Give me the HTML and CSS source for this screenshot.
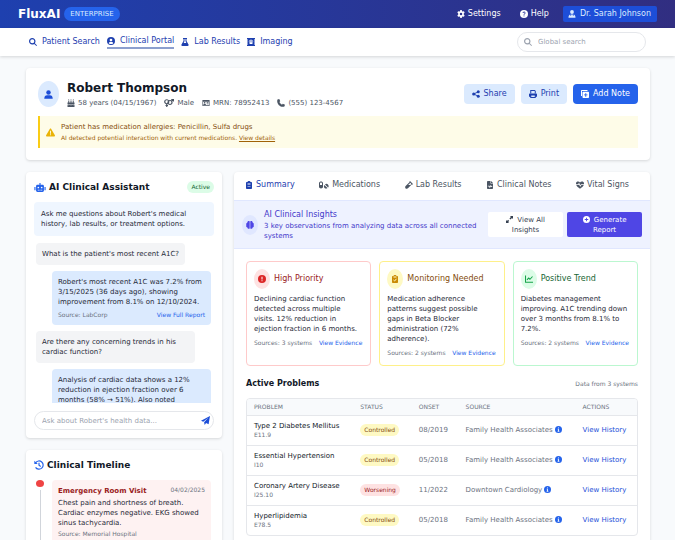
FILE: index.html
```html
<!DOCTYPE html>
<html lang="en">
<head>
<meta charset="utf-8">
<meta name="viewport" content="width=device-width, initial-scale=1">
<title>FluxAI Clinical Portal</title>
<link rel="stylesheet" href="styles.css">
</head>
<body>
<svg class="sprite" aria-hidden="true">
  <symbol id="search" viewBox="0 0 512 512"><path d="M416 208c0 45.900-14.900 88.300-40 122.700L502.600 457.400c12.500 12.500 12.500 32.800 0 45.300s-32.800 12.500-45.300 0L330.700 376c-34.400 25.200-76.800 40-122.700 40C93.100 416 0 322.900 0 208S93.100 0 208 0S416 93.100 416 208zM208 340a132 132 0 1 0 0-264 132 132 0 1 0 0 264z"/></symbol>
  <symbol id="user" viewBox="0 0 16 16"><circle cx="8" cy="4.500" r="4"/><path d="M.5 15.500c0-4 2-6 5-6h5c3 0 5 2 5 6z"/></symbol>
  <symbol id="doctor" viewBox="0 0 16 16"><circle cx="8" cy="4" r="3.800"/><path d="M1 15.500c0-4 1.500-6 4-6.300V12h1.200V9.200h3.600V12H11V9.200c2.500.3 4 2.300 4 6.300z"/></symbol>
  <symbol id="circle-user" viewBox="0 0 16 16"><path fill-rule="evenodd" d="M8 0a8 8 0 1 1 0 16A8 8 0 0 1 8 0zm0 3.500a2.700 2.700 0 1 0 0 5.400 2.700 2.700 0 0 0 0-5.400zM3.300 12.500c2.500 2.300 6.900 2.300 9.400 0-.7-1.700-2-2.500-3.400-2.500H6.700c-1.400 0-2.700.8-3.400 2.500z"/></symbol>
  <symbol id="flask" viewBox="0 0 16 16"><path fill-rule="evenodd" d="M4 0h8v2h-1v4l4 7c.8 1.500 0 3-1.600 3H2.600C1 16 .2 14.500 1 13l4-7V2H4zm3 2v4.500L5.300 10h5.400L9 6.500V2z"/></symbol>
  <symbol id="xray" viewBox="0 0 16 16"><path fill-rule="evenodd" d="M0 0h16v2h-1v12h1v2H0v-2h1V2H0zm7.400 2.500V4H4v1h3.400v1.300H3.500v1h3.900v1.300H4v1h2L4.500 12h7L10 9.600h2v-1H8.600V7.300h3.900v-1H8.600V5H12V4H8.600V2.500z"/></symbol>
  <symbol id="gear" viewBox="0 0 16 16"><path fill-rule="evenodd" d="M6.500 0h3l.5 2.300 1.400.8L13.700 2.400l1.600 2.700L13.500 6.800v2.400l1.800 1.700-1.600 2.700-2.300-.7-1.400.8-.5 2.300h-3L6 13.700l-1.400-.8-2.300.7L.7 10.900l1.800-1.700V6.800L.7 5.100l1.600-2.700 2.300.7L6 2.300zM8 5.500a2.500 2.500 0 1 0 0 5 2.500 2.500 0 0 0 0-5z"/></symbol>
  <symbol id="question" viewBox="0 0 16 16"><circle cx="8" cy="8" r="8"/><path class="cut-line" d="M5.800 6c.2-2.800 4.800-2.500 4.500.2C10.200 7.600 8 7.700 8 9.500M8 11v1.700"/></symbol>
  <symbol id="cake" viewBox="0 0 16 16"><path d="M2.500 3h2v4h-2zm4.500 0h2v4H7zm4.500 0h2v4h-2zM3.500 0l1 2h-2zM8 0l1 2H7zm4.500 0l1 2h-2zM1 7h14v3.500l-1.500.8-2-1-2 1-1.500-.8-1.500.8-2-1-2 1L1 10.500zM1 12l1.500.6 2-.9 2 1 1.500-.8 1.500.8 2-1 2 .9L15 12v4H1z"/></symbol>
  <symbol id="gender" viewBox="0 0 20 16"><g fill="none" stroke="currentColor" stroke-width="2.400"><circle cx="5.500" cy="5.500" r="4"/><circle cx="12" cy="7" r="4"/><path d="M5.500 10v6M3 13h5M15 4l4-3M14.500 1H19v4"/></g></symbol>
  <symbol id="idcard" viewBox="0 0 18 16"><path fill-rule="evenodd" d="M1 1h16v14H1zm1.500 4v8h13V5z"/><circle cx="6" cy="7.300" r="1.800"/><path d="M3 12.500c0-3.800 6-3.800 6 0zM10.500 6h4v1.700h-4zm0 3h4v1.700h-4z"/></symbol>
  <symbol id="phone" viewBox="0 0 16 16"><path d="M1 1.200 4.500 0l2 4.500L4.700 6c1.100 2.400 2.900 4.200 5.300 5.300l1.500-1.800 4.500 2L14.800 15C7 18-2 9 1 1.200z"/></symbol>
  <symbol id="share" viewBox="0 0 16 16"><circle cx="3.500" cy="8" r="3.200"/><circle cx="12.500" cy="3.500" r="3"/><circle cx="12.500" cy="12.500" r="3"/><path fill="none" stroke="currentColor" stroke-width="1.800" d="m12.500 3.500-9 4.500 9 4.500"/></symbol>
  <symbol id="print" viewBox="0 0 16 16"><path fill-rule="evenodd" d="M2.500 0h9L13.500 2v4.500h-2V2h-7v4.500h-2zM2 7h12c1.200 0 2 .8 2 2v4.500h-2.500V16h-11v-2.500H0V9c0-1.200.8-2 2-2zm2.500 4v3h7v-3z"/></symbol>
  <symbol id="copyplus" viewBox="0 0 16 16"><path fill-rule="evenodd" d="M0 1.500C0 .7.700 0 1.500 0H13v2H2v10H0zM4.500 3.500h10c.8 0 1.500.7 1.500 1.500v9.500c0 .8-.7 1.500-1.500 1.500h-10c-.8 0-1.500-.7-1.500-1.500V5c0-.8.700-1.500 1.500-1.500zm4 2.800V9H6v1.700h2.500v2.600h2v-2.600H13V9h-2.500V6.300z"/></symbol>
  <symbol id="warning" viewBox="0 0 16 16"><path fill-rule="evenodd" d="M8 1c.6 0 1 .3 1.300.8l6.500 11.200c.5 1 0 2-1.200 2H1.400C.2 15-.3 14 .2 13L6.700 1.800C7 1.300 7.400 1 8 1zM7.200 5v5h1.600V5zm0 6.200v1.600h1.600v-1.600z"/></symbol>
  <symbol id="robot" viewBox="0 0 20 16"><path fill-rule="evenodd" d="M9 0h2v3h3.500C16 3 17 4 17 5.500v8c0 1.500-1 2.500-2.500 2.500h-9C4 16 3 15 3 13.500v-8C3 4 4 3 5.500 3H9zM7 6.500a1.500 1.500 0 1 0 0 3 1.500 1.500 0 0 0 0-3zm6 0a1.500 1.500 0 1 0 0 3 1.500 1.500 0 0 0 0-3zM6 12v1.500h2V12zm3 0v1.500h2V12zm3 0v1.500h2V12zM0 7h2v6H0zm18 0h2v6h-2z"/></symbol>
  <symbol id="send" viewBox="0 0 16 16"><path d="M16 0 13.500 14.500 9 12.500 6.500 16 5.500 11 13 3 4 10 0 8.500z"/></symbol>
  <symbol id="history" viewBox="0 0 16 16"><path fill="none" stroke="currentColor" stroke-width="1.900" d="M2.500 4.500a6.600 6.600 0 1 1 0 7.200M8 4.500V8.300l2.800 2"/><path d="M.5 1v5.500H6z"/></symbol>
  <symbol id="clipboard" viewBox="0 0 14 16"><path fill-rule="evenodd" d="M2.500 2H4c.5-2.500 5.500-2.500 6 0h1.500C12.300 2 13 2.700 13 3.500v11c0 .8-.7 1.500-1.500 1.500h-9C1.700 16 1 15.300 1 14.500v-11C1 2.700 1.700 2 2.500 2zM4 4v1h6V4zm0 3v1h6V7zm0 3v1h6v-1z"/></symbol>
  <symbol id="clipcheck" viewBox="0 0 14 16"><path d="M2.500 2H4c.5-2.500 5.500-2.500 6 0h1.500C12.300 2 13 2.700 13 3.500v11c0 .8-.7 1.500-1.500 1.500h-9C1.700 16 1 15.300 1 14.500v-11C1 2.700 1.700 2 2.500 2z"/><path class="cut-check" d="M4 4h6M4 10l2.200 2L10 7.500"/></symbol>
  <symbol id="pills" viewBox="0 0 20 16"><path fill-rule="evenodd" d="M0 4.500C0 0 8 0 8 4.500v7C8 16 0 16 0 11.500zm2 0V8h4V4.500c0-2-4-2-4 0z"/><path d="M10.500 8 17 14.200c-4.500 3.300-9-2-6.500-6.200zM12 6.800c4-3.500 9.500 2 6.300 6.200z"/></symbol>
  <symbol id="vial" viewBox="0 0 16 16"><path fill-rule="evenodd" d="m10 0 6 6-1.300 1.300-.8-.6-8 8c-3 3-7.600-1.600-4.600-4.600l8-8-.6-.8zm.8 3.500L6.300 8h4.500l1.800-2z"/></symbol>
  <symbol id="filewave" viewBox="0 0 12 16"><path fill-rule="evenodd" d="M1.500 0H7v5h5v9.500c0 .8-.7 1.500-1.500 1.500h-9C.7 16 0 15.300 0 14.500v-13C0 .7.700 0 1.500 0zM8 0l4 4H8zM1.500 9.500V11H4l1 2.500h1L7.500 11l.7 1h2.300v-1.500H9L8 8.500H7L5.500 11 5 9.500z"/></symbol>
  <symbol id="heart" viewBox="0 0 16 16"><path d="M8 3C6 0 0 .5 0 5v1.500h4.200L6 3.500l2.700 5 1.200-2H16V5c0-4.500-6-5-8-2zM.5 8c1 3 4 5 7.500 7.500C11.500 13 14.500 11 15.500 8h-4.700L8.500 11.500 6 6.800 5 8z"/></symbol>
  <symbol id="brain" viewBox="0 0 16 16"><path d="M7.400 1v14C5 16.500 3 15 2.800 13 .5 12.500-.3 10 .8 8-.3 6 .5 4 2.500 3.500 2.500.8 5.500-.8 7.400 1zM8.600 1v14c2.400 1.500 4.400 0 4.600-2 2.300-.5 3.100-3 2-5 1.100-2 .3-4-1.700-4.500 0-2.700-3-4.300-4.900-2.500z"/></symbol>
  <symbol id="expand" viewBox="0 0 16 16"><path d="M9 0h7v7l-2.300-2.300-3.500 3.500-2.400-2.400 3.500-3.500zM7 16H0V9l2.300 2.300 2.500-2.500 2.400 2.400-2.500 2.500z"/></symbol>
  <symbol id="plus-circle" viewBox="0 0 16 16"><path fill-rule="evenodd" d="M8 0a8 8 0 1 1 0 16A8 8 0 0 1 8 0zM7 4v3H4v2h3v3h2V9h3V7H9V4z"/></symbol>
  <symbol id="alert" viewBox="0 0 16 16"><circle cx="8" cy="8" r="8"/><path class="cut-light" d="M8 3.500v5.500M8 10.500v2"/></symbol>
  <symbol id="chart" viewBox="0 0 16 16"><path fill="none" stroke="currentColor" stroke-width="2.200" stroke-linejoin="round" d="M1 1v13.500h15M4 10l3-4 3 2.500L15 3"/></symbol>
  <symbol id="info" viewBox="0 0 16 16"><circle cx="8" cy="8" r="8"/><path class="cut-light" d="M8 3.300v2M6.300 7.200H8V12M6 12h4"/></symbol>
</svg>

<div class="page">
<header class="topbar">
  <div class="brand"><span class="logo">FluxAI</span><span class="edition">ENTERPRISE</span></div>
  <div class="account">
    <button class="plain"><svg class="icon"><use href="#gear"/></svg>Settings</button>
    <button class="plain help"><svg class="icon"><use href="#question"/></svg>Help</button>
    <button class="profile"><svg class="icon"><use href="#doctor"/></svg>Dr. Sarah Johnson</button>
  </div>
</header>

<div class="navbar">
  <nav class="links">
    <a href="#"><svg class="icon"><use href="#search"/></svg>Patient Search</a>
    <a href="#" class="current"><svg class="icon"><use href="#circle-user"/></svg>Clinical Portal</a>
    <a href="#"><svg class="icon"><use href="#flask"/></svg>Lab Results</a>
    <a href="#"><svg class="icon"><use href="#xray"/></svg>Imaging</a>
  </nav>
  <label class="search"><svg class="icon"><use href="#search"/></svg><input type="search" placeholder="Global search" aria-label="Global search"></label>
</div>

<main>
  <section class="card patient">
    <div class="patient-row">
      <div class="avatar"><svg class="icon"><use href="#user"/></svg></div>
      <div class="identity">
        <h1>Robert Thompson</h1>
        <ul class="facts">
          <li><svg class="icon"><use href="#cake"/></svg>58 years (04/15/1967)</li>
          <li><svg class="icon wide"><use href="#gender"/></svg>Male</li>
          <li><svg class="icon"><use href="#idcard"/></svg>MRN: 78952413</li>
          <li><svg class="icon"><use href="#phone"/></svg>(555) 123-4567</li>
        </ul>
      </div>
      <div class="actions">
        <button><svg class="icon"><use href="#share"/></svg>Share</button>
        <button><svg class="icon"><use href="#print"/></svg>Print</button>
        <button class="primary"><svg class="icon"><use href="#copyplus"/></svg>Add Note</button>
      </div>
    </div>
    <div class="allergy">
      <svg class="icon"><use href="#warning"/></svg>
      <div>
        <p class="allergy-title">Patient has medication allergies: Penicillin, Sulfa drugs</p>
        <p class="allergy-note">AI detected potential interaction with current medications. <a href="#">View details</a></p>
      </div>
    </div>
  </section>

  <div class="columns">
    <aside>
      <section class="card side">
        <div class="side-head"><h2><svg class="icon big"><use href="#robot"/></svg>AI Clinical Assistant</h2><span class="pill green">Active</span></div>
        <p class="intro">Ask me questions about Robert's medical history, lab results, or treatment options.</p>
        <div class="chat">
          <p class="bubble">What is the patient's most recent A1C?</p>
          <div class="bubble reply">
            <p>Robert's most recent A1C was 7.2% from 3/15/2025 (36 days ago), showing improvement from 8.1% on 12/10/2024.</p>
            <div class="meta"><span>Source: LabCorp</span><a href="#">View Full Report</a></div>
          </div>
          <p class="bubble">Are there any concerning trends in his cardiac function?</p>
          <div class="bubble reply">
            <p>Analysis of cardiac data shows a 12% reduction in ejection fraction over 6 months (58% → 51%). Also noted</p>
          </div>
        </div>
        <div class="ask"><input type="text" placeholder="Ask about Robert's health data..." aria-label="Ask about Robert's health data"><button aria-label="Send"><svg class="icon"><use href="#send"/></svg></button></div>
      </section>

      <section class="card side">
        <h2><svg class="icon history"><use href="#history"/></svg>Clinical Timeline</h2>
        <div class="timeline">
          <div class="rail"><span class="dot"></span><span class="line"></span></div>
          <article class="event">
            <div class="event-head"><h3>Emergency Room Visit</h3><time>04/02/2025</time></div>
            <p>Chest pain and shortness of breath. Cardiac enzymes negative. EKG showed sinus tachycardia.</p>
            <small>Source: Memorial Hospital</small>
          </article>
        </div>
      </section>
    </aside>

    <section class="card record">
      <nav class="tabs">
        <a href="#" class="current"><svg class="icon"><use href="#clipboard"/></svg>Summary</a>
        <a href="#"><svg class="icon wide"><use href="#pills"/></svg>Medications</a>
        <a href="#"><svg class="icon"><use href="#vial"/></svg>Lab Results</a>
        <a href="#"><svg class="icon"><use href="#filewave"/></svg>Clinical Notes</a>
        <a href="#"><svg class="icon"><use href="#heart"/></svg>Vital Signs</a>
      </nav>
      <div class="insights">
        <div class="orb indigo"><svg class="icon"><use href="#brain"/></svg></div>
        <div class="insights-text"><h3>AI Clinical Insights</h3><p>3 key observations from analyzing data across all connected systems</p></div>
        <button><svg class="icon"><use href="#expand"/></svg> View All Insights</button>
        <button class="solid"><svg class="icon"><use href="#plus-circle"/></svg> Generate Report</button>
      </div>
      <div class="body">
        <div class="findings">
          <article class="finding red">
            <div class="finding-head"><div class="orb"><svg class="icon"><use href="#alert"/></svg></div><h3>High Priority</h3></div>
            <p>Declining cardiac function detected across multiple visits. 12% reduction in ejection fraction in 6 months.</p>
            <div class="meta"><span>Sources: 3 systems</span><a href="#">View Evidence</a></div>
          </article>
          <article class="finding yellow">
            <div class="finding-head"><div class="orb"><svg class="icon"><use href="#clipcheck"/></svg></div><h3>Monitoring Needed</h3></div>
            <p>Medication adherence patterns suggest possible gaps in Beta Blocker administration (72% adherence).</p>
            <div class="meta"><span>Sources: 2 systems</span><a href="#">View Evidence</a></div>
          </article>
          <article class="finding teal">
            <div class="finding-head"><div class="orb"><svg class="icon"><use href="#chart"/></svg></div><h3>Positive Trend</h3></div>
            <p>Diabetes management improving. A1C trending down over 3 months from 8.1% to 7.2%.</p>
            <div class="meta"><span>Sources: 2 systems</span><a href="#">View Evidence</a></div>
          </article>
        </div>
        <div class="table-head"><h3>Active Problems</h3><span>Data from 3 systems</span></div>
        <div class="table-box">
        <table>
          <thead><tr><th class="c-problem">PROBLEM</th><th class="c-status">STATUS</th><th class="c-onset">ONSET</th><th class="c-source">SOURCE</th><th>ACTIONS</th></tr></thead>
          <tbody>
            <tr><td><b>Type 2 Diabetes Mellitus</b><small>E11.9</small></td><td><span class="pill amber">Controlled</span></td><td>08/2019</td><td>Family Health Associates <svg class="icon info"><use href="#info"/></svg></td><td><a href="#">View History</a></td></tr>
            <tr><td><b>Essential Hypertension</b><small>I10</small></td><td><span class="pill amber">Controlled</span></td><td>05/2018</td><td>Family Health Associates <svg class="icon info"><use href="#info"/></svg></td><td><a href="#">View History</a></td></tr>
            <tr><td><b>Coronary Artery Disease</b><small>I25.10</small></td><td><span class="pill rose">Worsening</span></td><td>11/2022</td><td>Downtown Cardiology <svg class="icon info"><use href="#info"/></svg></td><td><a href="#">View History</a></td></tr>
            <tr><td><b>Hyperlipidemia</b><small>E78.5</small></td><td><span class="pill amber">Controlled</span></td><td>05/2018</td><td>Family Health Associates <svg class="icon info"><use href="#info"/></svg></td><td><a href="#">View History</a></td></tr>
          </tbody>
        </table>
        </div>
      </div>
    </section>
  </div>
</main>
</div>
</body>
</html>
```
FILE: styles.css
```css
* { box-sizing: border-box; margin: 0; padding: 0; }
body {
  font-family: "DejaVu Sans", sans-serif;
  font-size: 7px;
  line-height: 10px;
  color: #1f2937;
  background: #f8fafc;
}
button, input { font: inherit; color: inherit; border: 0; background: none; }
a { color: inherit; text-decoration: none; }
ul { list-style: none; }
small { display: block; font-size: 6px; line-height: 8px; color: #6b7280; }
.sprite { display: none; }
.icon { width: 8px; height: 8px; flex: none; fill: currentColor; }
.icon.wide { width: 10px; }
.cut-line { fill: none; stroke: #2a339a; stroke-width: 2; }
.cut-light { fill: none; stroke: #fff; stroke-width: 2; }
.cut-check { fill: none; stroke: #fef9c3; stroke-width: 2; }
.page { height: 100vh; overflow: hidden; }

.topbar {
  display: flex; align-items: center; justify-content: space-between;
  height: 28px; padding: 0 18px;
  color: #fff; background: linear-gradient(90deg, #1e40af, #312e81);
}
.brand { display: flex; align-items: center; gap: 4px; }
.logo { font-size: 12px; line-height: 16px; font-weight: 700; }
.edition { padding: 2px 6px; border-radius: 8px; background: #2563eb; color: #dbeafe; }
.account { display: flex; align-items: center; font-size: 8px; }
.account button { display: flex; align-items: center; gap: 3px; }
.account .help { margin-left: 19px; }
.account .profile { margin-left: 14px; padding: 3px 6px 3px 5px; gap: 4px; border-radius: 2px; background: #1d4ed8; color: #dbeafe; }

.navbar {
  display: flex; align-items: center; justify-content: space-between;
  height: 28px; padding: 0 29px; background: #fff;
  box-shadow: 0 1px 3px rgba(0, 0, 0, .15);
}
.links { display: flex; align-items: center; gap: 7px; font-size: 8px; color: #1e40af; }
.links a { display: flex; align-items: center; gap: 5px; height: 14px; }
.links .current { border-bottom: 2px solid #8c9fce; }
.search { display: flex; align-items: center; gap: 6px; width: 129px; height: 20px; padding: 0 6px; border: 1px solid #e5e7eb; border-radius: 10px; color: #9ca3af; }
.search input { flex: 1; min-width: 0; outline: 0; }
input::placeholder { color: #9ca3af; opacity: 1; }

main { padding: 12px 25px 12px 26px; }
.card { background: #fff; border-radius: 4px; box-shadow: 0 1px 3px rgba(0, 0, 0, .14); }
.patient { padding: 12px; }
.patient-row { display: flex; align-items: center; }
.avatar { display: flex; align-items: center; justify-content: center; width: 21px; height: 26px; border-radius: 50%; background: #dbeafe; color: #1d4ed8; }
.avatar .icon { width: 9px; height: 9px; }
.identity { margin-left: 8px; }
h1 { font-size: 12px; line-height: 16px; color: #111827; }
.facts { display: flex; gap: 8px; margin-top: 2px; color: #4b5563; }
.facts li { display: flex; align-items: center; gap: 3px; }
.actions { display: flex; gap: 6px; margin-left: auto; font-size: 8px; color: #1e40af; }
.actions button { display: flex; align-items: center; gap: 4px; height: 20px; padding: 0 8px; border-radius: 4px; background: #dbeafe; }
.actions .primary { background: #2563eb; color: #fff; }
.allergy { display: flex; align-items: center; gap: 6px; height: 32px; margin-top: 8px; padding: 0 6px; border-left: 2px solid #facc15; background: #fefce8; color: #eab308; }
.allergy .icon { width: 9px; height: 9px; }
.allergy-title { color: #854d0e; }
.allergy-note { margin-top: 1px; font-size: 6px; color: #a16207; }
.allergy-note a { text-decoration: underline; }

.columns { display: grid; grid-template-columns: 196px 1fr; gap: 12px; margin-top: 12px; align-items: start; }
aside { display: grid; gap: 12px; }
.side { padding: 8px; }
.side-head { display: flex; align-items: center; justify-content: space-between; }
h2 { display: flex; align-items: center; gap: 3px; font-size: 9px; line-height: 14px; color: #111827; }
h2 .icon { color: #2563eb; }
.icon.big { width: 12px; height: 9px; }
.icon.history { width: 10px; height: 10px; }
.pill { display: inline-block; padding: 2px 4px; border-radius: 6px; font-size: 6px; line-height: 8px; }
.green { background: #dcfce7; color: #166534; }
.amber { background: #fef9c3; color: #854d0e; }
.rose { background: #fee2e2; color: #991b1b; }
.intro { margin-top: 8px; padding: 7px; border-radius: 4px; background: #eff6ff; }
.chat { display: flex; flex-direction: column; align-items: flex-start; gap: 6px; height: 160px; margin-top: 7px; padding: 0 3px 0 2px; overflow: hidden; }
.bubble { flex: none; max-width: 159px; padding: 6px; border-radius: 4px; background: #f3f4f6; }
.bubble.reply { align-self: flex-end; width: 159px; background: #dbeafe; }
.meta { display: flex; justify-content: space-between; margin-top: 4px; font-size: 6px; line-height: 8px; color: #6b7280; }
.meta a { color: #2563eb; }
.ask { display: flex; align-items: center; height: 19px; margin-top: 8px; padding: 0 3px 0 7px; border: 1px solid #e5e7eb; border-radius: 10px; }
.ask input { flex: 1; min-width: 0; outline: 0; }
.ask button { display: flex; color: #1d4ed8; }
.ask .icon { width: 9px; height: 9px; }

.timeline { display: flex; gap: 8px; margin-top: 8px; padding: 0 3px 0 2px; }
.rail { display: flex; flex-direction: column; align-items: center; gap: 3px; }
.dot { width: 8px; height: 7px; border-radius: 50%; background: #ef4444; }
.line { flex: 1; width: 1px; background: #d1d5db; }
.event { flex: 1; padding: 6px 6px 20px; border-radius: 4px; background: #fef2f2; }
.event-head { display: flex; justify-content: space-between; }
.event h3 { font-size: 7px; color: #991b1b; }
.event time { font-size: 6px; line-height: 8px; color: #6b7280; }
.event p { margin: 2px 0; }

.tabs { display: flex; justify-content: space-between; height: 28px; padding: 0 21px 3px 11px; align-items: center; font-size: 8px; color: #4b5563; }
.tabs a { display: flex; align-items: center; gap: 3px; }
.tabs .current { color: #1e40af; }
.insights { display: flex; align-items: center; height: 49px; padding: 0 8px; border: solid #e0e7ff; border-width: 1px 0; background: #eef2ff; color: #4338ca; }
.orb { display: flex; align-items: center; justify-content: center; flex: none; width: 16px; height: 20px; border-radius: 50%; }
.orb.indigo { background: #e0e7ff; color: #4f46e5; }
.insights-text { flex: 1; margin: 0 6px; }
.insights h3, .finding h3 { font-size: 8px; line-height: 12px; font-weight: 400; }
.insights button { width: 75px; height: 25px; padding: 0 12px; border-radius: 2px; background: #fff; color: #374151; }
.insights button .icon { width: 7px; height: 7px; margin-right: 2px; vertical-align: -1px; }
.insights .solid { margin-left: 4px; background: #4f46e5; color: #fff; }
.body { padding: 12px; }
.findings { display: grid; grid-template-columns: repeat(3, 1fr); gap: 8px; }
.finding { padding: 7px 8px 7px 7px; border: 1px solid; border-radius: 4px; min-height: 105px; }
.finding-head { display: flex; align-items: center; gap: 4px; margin-bottom: 5px; }
.finding .meta { margin-top: 5px; }
.finding.red { border-color: #fecaca; }
.red .orb { background: #fee2e2; color: #dc2626; }
.red h3 { color: #991b1b; }
.finding.yellow { border-color: #fef08a; }
.yellow .orb { background: #fef9c3; color: #ca8a04; }
.yellow h3 { color: #854d0e; }
.finding.teal { border-color: #bbf7d0; }
.teal .orb { background: #dcfce7; color: #16a34a; }
.teal h3 { color: #166534; }
.table-head { display: flex; align-items: center; justify-content: space-between; margin: 12px 0 8px; }
.table-head h3 { font-size: 8px; line-height: 12px; color: #111827; }
.table-head span { font-size: 6px; color: #6b7280; }
.table-box { border: 1px solid #e5e7eb; border-radius: 4px; overflow: hidden; }
table { width: 100%; border-collapse: collapse; color: #6b7280; }
th { height: 16px; padding-left: 8px; text-align: left; font-size: 6px; font-weight: 400; background: #f8fafc; }
td { height: 30px; padding-left: 8px; border-top: 1px solid #e5e7eb; white-space: nowrap; }
th:first-child, td:first-child { padding-left: 7px; }
td b { display: block; font-weight: 400; color: #111827; }
td a { color: #1d4ed8; }
.c-problem { width: 27%; }
.c-status { width: 15%; }
.c-onset { width: 12%; }
.c-source { width: 30%; }
.info { width: 7px; height: 7px; color: #2563eb; vertical-align: -1px; }
```
